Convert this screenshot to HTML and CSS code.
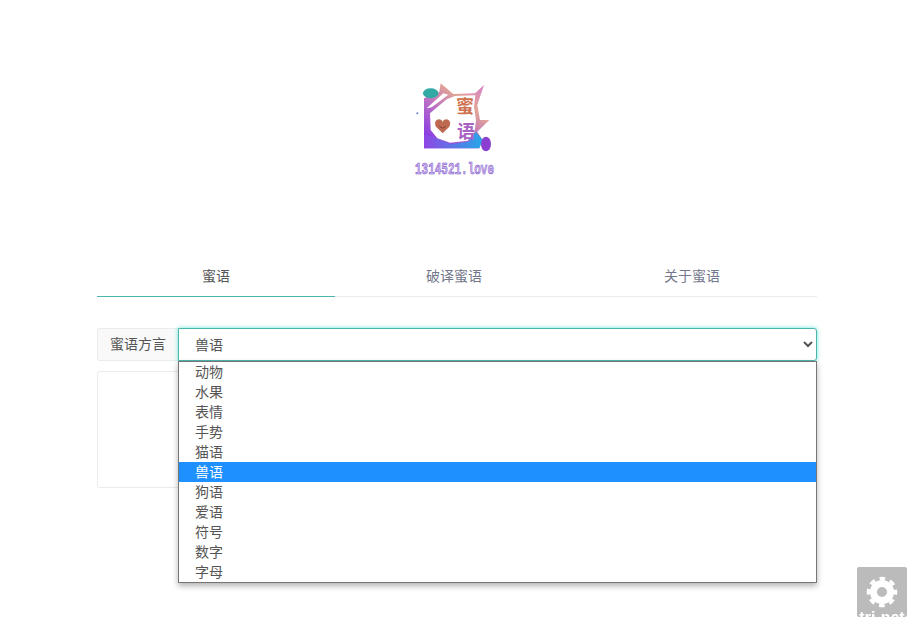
FILE: index.html
```html
<!DOCTYPE html>
<html lang="zh-CN">
<head>
    <meta charset="UTF-8">
    <meta name="viewport" content="width=device-width, initial-scale=1.0">
    <title>蜜语</title>
    <link rel="stylesheet" href="styles.css">
</head>
<body>
    <div class="logo-wrap">
        <svg class="logo" viewBox="407 80 100 100" width="100" height="100">
            <defs>
                <linearGradient id="frame" x1="0.9" y1="0" x2="0.1" y2="1">
                    <stop offset="0" stop-color="#d77fd0"/>
                    <stop offset="0.3" stop-color="#e3a596"/>
                    <stop offset="0.6" stop-color="#b86cc8"/>
                    <stop offset="1" stop-color="#7c2fe8"/>
                </linearGradient>
                <linearGradient id="corner" x1="0" y1="0" x2="1" y2="0">
                    <stop offset="0" stop-color="#8f45e4"/>
                    <stop offset="1" stop-color="#25a8e8"/>
                </linearGradient>
            </defs>
            <g transform="translate(400 70) scale(0.3333)">
                <path d="M72 85 L72 235 L238 235 L248 210 L232 185 L268 150 L240 150 L232 105 L252 45 L225 70 L160 72 L122 40 L118 65 Z" fill="url(#frame)"/>
                <path d="M72 235 L72 195 L100 200 L150 222 L205 215 L228 185 L248 210 L238 235 Z" fill="url(#corner)"/>
                <path d="M165 78 L226 76 L222 110 L228 150 L224 185 L203 212 L150 218 L112 205 L92 180 L90 130 L140 88 Z" fill="#fff"/>
                <path d="M130 70 L145 74 L95 112 L80 115 Z" fill="#fff"/>
                <ellipse cx="92" cy="70" rx="23" ry="15" fill="#33a9a5"/>
                <ellipse cx="258" cy="222" rx="15" ry="22" fill="#8a3fd0"/>
                <circle cx="52" cy="130" r="3" fill="#6a7fc0"/>
                <path d="M128 190 L108 170 C98 150 120 140 128 155 C136 140 158 150 148 170 Z" fill="#bd6a50"/>
                <path d="M118 168 Q128 180 138 168" fill="none" stroke="#7a3a30" stroke-width="2.500"/>
            </g>
            <text class="logo-mi" x="465" y="112.500" text-anchor="middle">蜜</text>
            <text class="logo-yu" x="466" y="138" text-anchor="middle">语</text>
            <text class="logo-url" x="454.500" y="174" text-anchor="middle" textLength="79" lengthAdjust="spacingAndGlyphs">1314521.love</text>
        </svg>
    </div>

    <div class="container">
        <ul class="nav-tabs">
            <li class="nav-item active">蜜语</li>
            <li class="nav-item">破译蜜语</li>
            <li class="nav-item">关于蜜语</li>
        </ul>

        <div class="input-group">
            <span class="input-label">蜜语方言</span>
            <div class="select-wrap">
                <select class="dialect-select">
                    <option>兽语</option>
                </select>
                <ul class="select-menu">
                    <li>动物</li>
                    <li>水果</li>
                    <li>表情</li>
                    <li>手势</li>
                    <li>猫语</li>
                    <li class="selected">兽语</li>
                    <li>狗语</li>
                    <li>爱语</li>
                    <li>符号</li>
                    <li>数字</li>
                    <li>字母</li>
                </ul>
            </div>
        </div>

        <div class="text-box"></div>
    </div>

    <div class="settings">
        <svg viewBox="0 0 32 32" width="32" height="32">
            <circle cx="16" cy="16" r="8.500" fill="none" stroke="#fff" stroke-width="7"/>
            <circle class="gear-teeth" cx="16" cy="16" r="13.500" fill="none" stroke="#fff" stroke-width="3.500"/>
        </svg>
        <span class="settings-text">tri-net</span>
    </div>
</body>
</html>
```

FILE: styles.css
```css
html {
    height: 100%;
}
body {
    font-family: "Liberation Sans", "Noto Sans CJK SC", sans-serif;
    font-size: 14px;
    line-height: 20px;
    color: #555;
    margin: 0;
    min-height: 100%;
    box-sizing: border-box;
    padding: 80px 3px 0 0;
    background-color: white;
}
ul {
    list-style: none;
    margin: 0;
    padding: 0;
}
.logo-wrap {
    display: flex;
    justify-content: center;
    height: 177px;
}
.logo-mi {
    font-size: 18px;
    font-weight: bold;
    fill: #cf7250;
}
.logo-yu {
    font-size: 18px;
    font-weight: bold;
    fill: #a862c4;
}
.logo-url {
    font-family: "Liberation Mono", monospace;
    font-size: 17px;
    font-weight: bold;
    fill: #cdb8ee;
    stroke: #7a4cc8;
    stroke-width: 0.6px;
}
.container {
    width: 720px;
    margin: 0 auto;
}
.nav-tabs {
    display: flex;
    border-bottom: 1px solid #e9ecef;
    margin-bottom: 31px;
}
.nav-item {
    flex: 0 0 238px;
    height: 39px;
    line-height: 38px;
    text-align: center;
    color: #74788d;
}
.nav-item.active {
    color: #555;
    border-bottom: 1px solid #4db6ac;
    margin-bottom: -1px;
}
.input-group {
    display: flex;
    height: 33px;
}
.input-label {
    width: 81px;
    box-sizing: border-box;
    height: 33px;
    line-height: 31px;
    text-align: center;
    background-color: #f9f9f9;
    border: 1px solid #e9ecef;
    border-right: none;
    border-radius: 3px 0 0 3px;
}
.select-wrap {
    flex: 1;
    position: relative;
}
.dialect-select {
    display: block;
    width: 100%;
    height: 33px;
    padding: 0 12px;
    font-family: inherit;
    font-size: 14px;
    color: #555;
    background-color: white;
    border: 1px solid #4db6ac;
    border-radius: 0 3px 3px 0;
    box-shadow: 0 0 4px rgba(64, 224, 208, 0.8);
    outline: none;
}
.select-menu {
    position: absolute;
    top: 33px;
    left: 0;
    right: 0;
    z-index: 5;
    background-color: white;
    border: 1px solid #767676;
    box-shadow: 0 3px 6px rgba(0, 0, 0, 0.3);
}
.select-menu li {
    height: 20px;
    padding-left: 16px;
    line-height: 20px;
}
.select-menu li.selected {
    background-color: #1e90ff;
    color: white;
}
.text-box {
    height: 115px;
    margin-top: 10px;
    border: 1px solid #e9ecef;
    border-radius: 3px;
}
.settings {
    position: fixed;
    top: 567px;
    left: 857px;
    width: 50px;
    height: 50px;
    display: flex;
    justify-content: center;
    padding-top: 9px;
    box-sizing: border-box;
    overflow: hidden;
    background-color: #bbbbbb;
    border-radius: 2px;
}
.gear-teeth {
    stroke-dasharray: 5.600 5.003;
    stroke-dashoffset: 2.800;
}
.settings-text {
    position: absolute;
    left: 0;
    right: 0;
    top: 41px;
    text-align: center;
    color: white;
    font-size: 16px;
    font-weight: bold;
}
```
